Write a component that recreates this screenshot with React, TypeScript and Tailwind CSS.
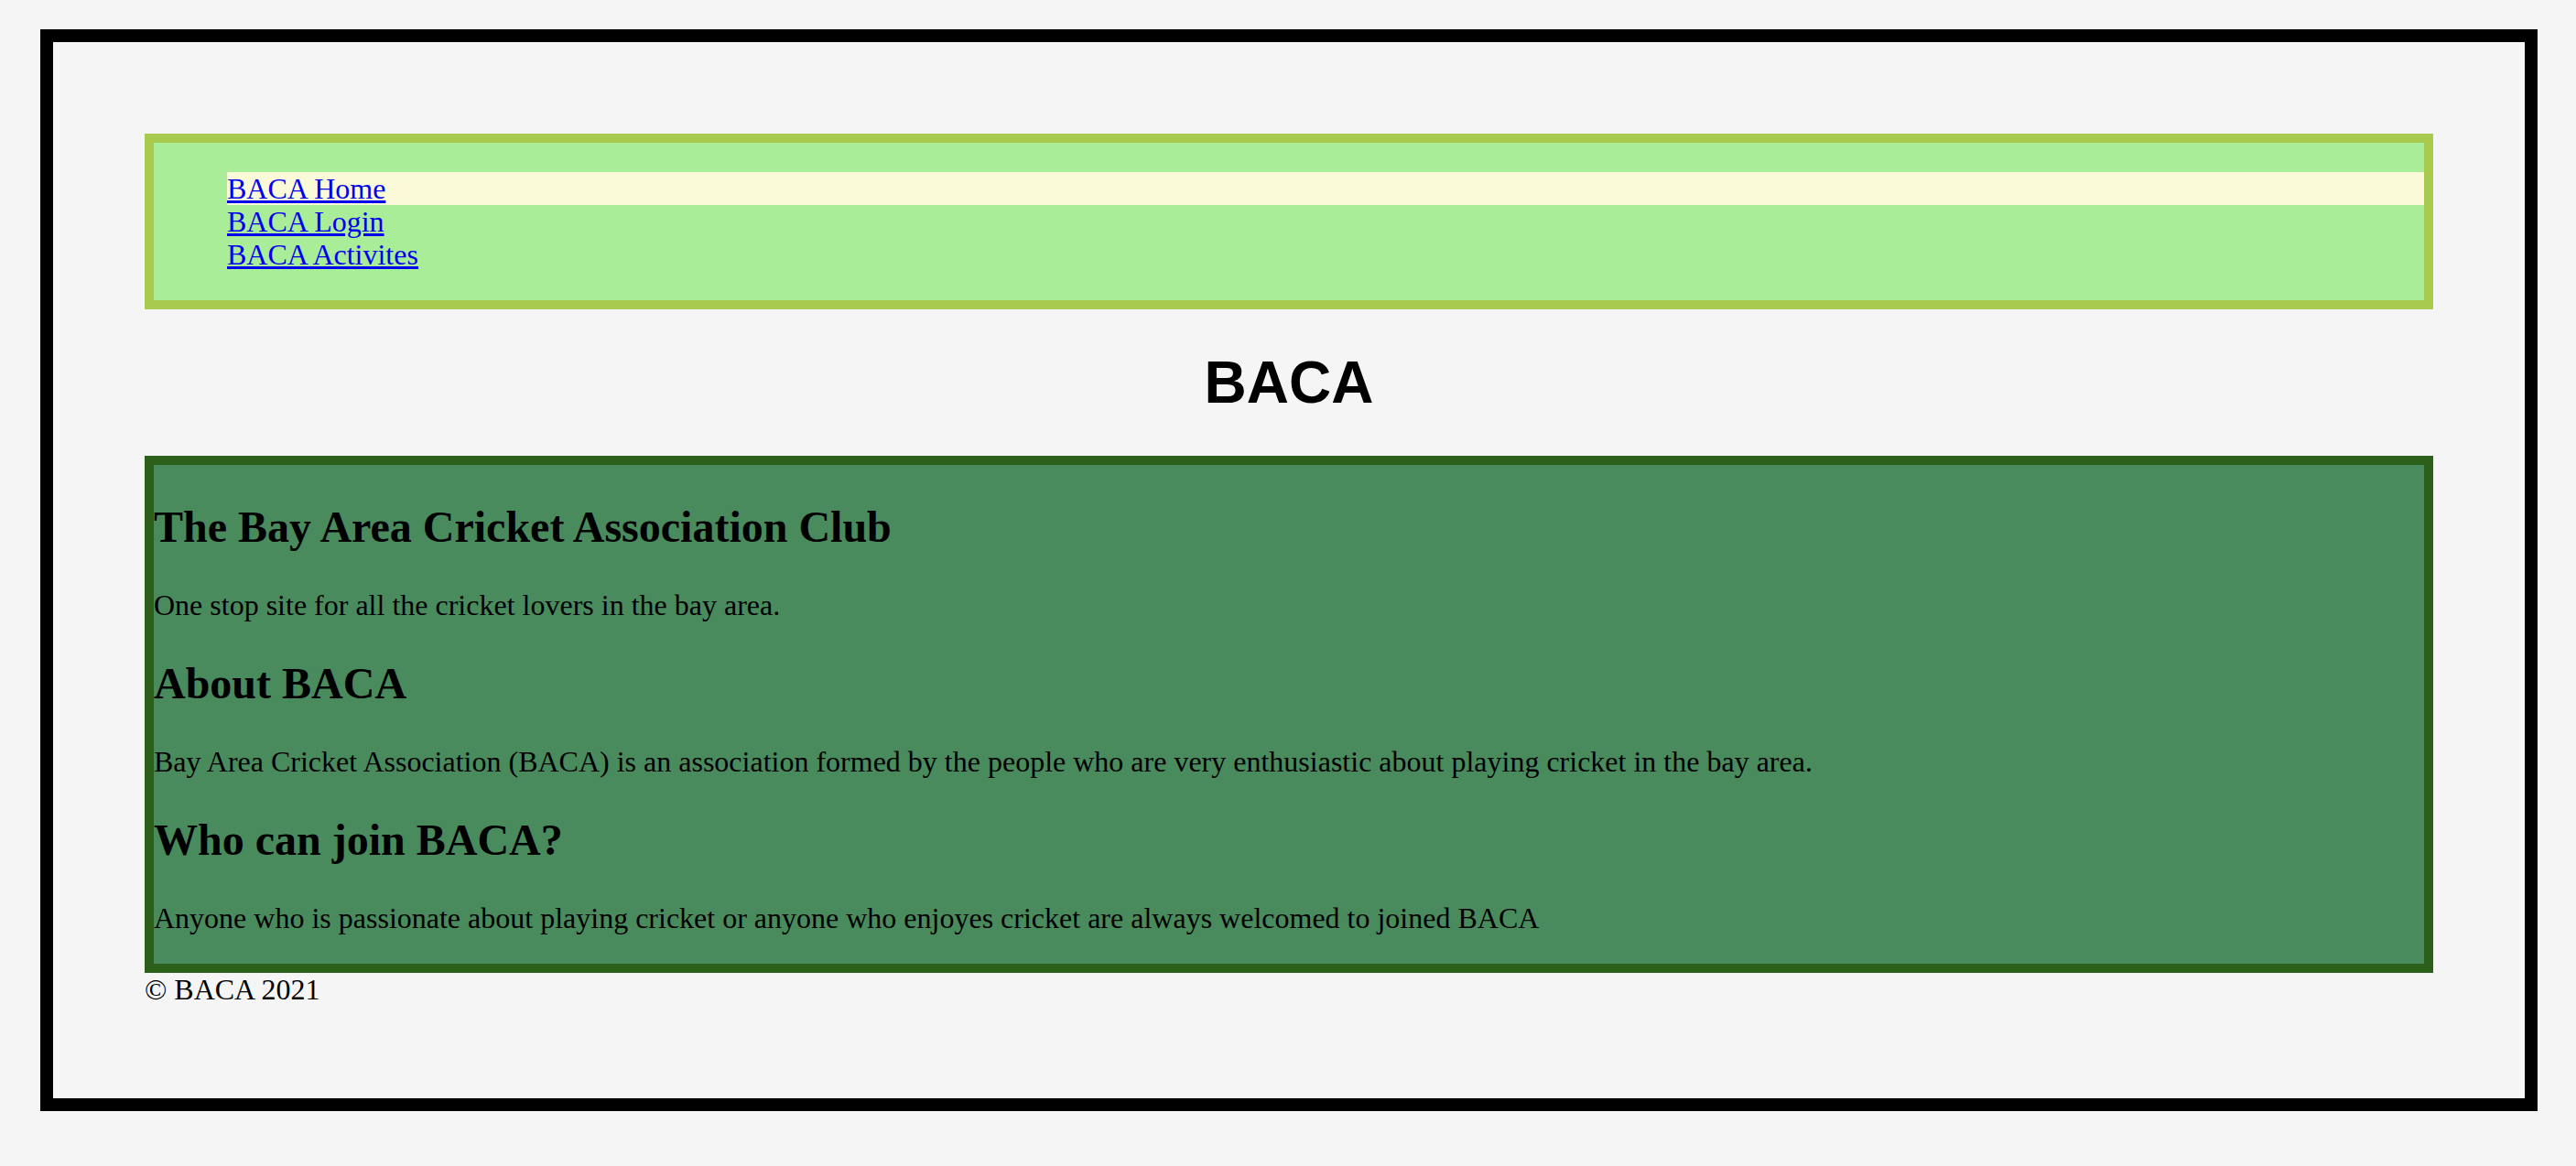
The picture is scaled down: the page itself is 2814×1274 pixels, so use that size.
export default function App() {
  return (
    <div className="min-h-screen w-full bg-[#f5f5f5] pt-[32px] pb-[60px]" style={{ fontFamily: '"Liberation Serif", "Times New Roman", serif' }}>
      <div className="ml-[44px] mr-[42px] border-[14px] border-black p-[100px] text-black">
        <nav className="border-[10px] border-[#a7ca4f] bg-[#a9ed98]">
          <ul className="my-[32px] pl-[80px] text-[32px] leading-[36px] [font-family:'Liberation_Serif',serif]">
            <li className="bg-[#fafad8]">
              <a href="#" className="text-[#0000ee] underline">BACA Home</a>
            </li>
            <li>
              <a href="#" className="text-[#0000ee] underline">BACA Login</a>
            </li>
            <li>
              <a href="#" className="text-[#0000ee] underline">BACA Activites</a>
            </li>
          </ul>
        </nav>
        <h1 className="my-[43px] text-center text-[64px] leading-[74px] font-bold [font-family:'Liberation_Sans',Arial,sans-serif]">BACA</h1>
        <main className="border-[10px] border-[#2c5f19] bg-[#4a8b5e] pt-[40px] pb-[32px] [font-family:'Liberation_Serif',serif]">
          <h2 className="text-[48px] leading-[55px] font-bold">The Bay Area Cricket Association Club</h2>
          <p className="mt-[40px] text-[32px] leading-[36px]">One stop site for all the cricket lovers in the bay area.</p>
          <h2 className="mt-[40px] text-[48px] leading-[55px] font-bold">About BACA</h2>
          <p className="mt-[40px] text-[32px] leading-[36px]">Bay Area Cricket Association (BACA) is an association formed by the people who are very enthusiastic about playing cricket in the bay area.</p>
          <h2 className="mt-[40px] text-[48px] leading-[55px] font-bold">Who can join BACA?</h2>
          <p className="mt-[40px] text-[32px] leading-[36px]">Anyone who is passionate about playing cricket or anyone who enjoyes cricket are always welcomed to joined BACA</p>
        </main>
        <footer className="text-[32px] leading-[37px] [font-family:'Liberation_Serif',serif]">© BACA 2021</footer>
      </div>
    </div>
  );
}
